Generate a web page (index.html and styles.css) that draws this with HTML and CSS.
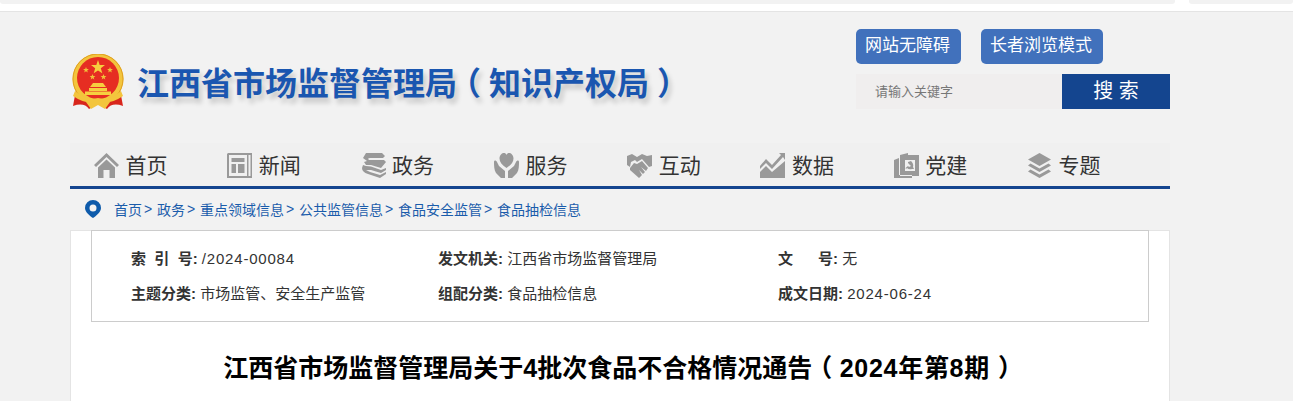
FILE: index.html
```html
<!DOCTYPE html>
<html lang="zh-CN">
<head>
<meta charset="utf-8">
<title>江西省市场监督管理局</title>
<link rel="stylesheet" href="styles.css">
</head>
<body>
<div class="topstrip">
  <div class="topbar"><span class="seg seg-main"></span><span class="seg seg-side"></span></div>
</div>
<div class="wrap">
  <header class="header">
    <div class="brand">
      <svg class="emblem" viewBox="0 0 52 56" width="52" height="56" aria-hidden="true">
        <path d="M4 36 L1 52 Q12 48 17 55 L26 50 L35 55 Q40 48 51 52 L48 36 Z" fill="#d8261c"/>
        <circle cx="26" cy="25" r="25.5" fill="#f3c53d"/>
        <circle cx="26" cy="25" r="25" fill="none" stroke="#e0a021" stroke-width="1"/>
        <circle cx="26" cy="24" r="21" fill="#e62d22"/>
        <polygon points="26,6 27.7,11 33,11.1 28.8,14.3 30.3,19.3 26,16.4 21.7,19.3 23.2,14.3 19,11.1 24.3,11" fill="#f6cf3f"/>
        <polygon points="14,13 14.8,15 16.9,15.1 15.2,16.4 15.8,18.4 14,17.2 12.2,18.4 12.8,16.4 11.1,15.1 13.2,15" fill="#f0c23a"/>
        <polygon points="38,13 38.8,15 40.9,15.1 39.2,16.4 39.8,18.4 38,17.2 36.2,18.4 36.8,16.4 35.1,15.1 37.2,15" fill="#f0c23a"/>
        <polygon points="20.5,20 21.3,22 23.4,22.1 21.7,23.4 22.3,25.4 20.5,24.2 18.7,25.4 19.3,23.4 17.6,22.1 19.7,22" fill="#f0c23a"/>
        <polygon points="31.5,20 32.3,22 34.4,22.1 32.7,23.4 33.3,25.4 31.5,24.2 29.7,25.4 30.3,23.4 28.6,22.1 30.7,22" fill="#f0c23a"/>
        <path d="M21 29 H31 L34 33 H18 Z M17 34 H35 V37 H17 Z M13 37.5 H39 V41 H13 Z" fill="#f6cf3f"/>
        <path d="M3 37 Q14 47 26 44 Q38 47 49 37 L51 42 Q38 51 26 48 Q14 51 1 42 Z" fill="#f3c53d"/>
        <path d="M14 48 H38 L33 55 L26 51 L19 55 Z" fill="#f3c53d"/>
      </svg>
      <h1 class="site-title">江西省市场监督管理局<span class="paren">（</span>知识产权局<span class="paren">）</span></h1>
    </div>
    <div class="tools">
      <div class="mode-links">
        <a class="mode-btn">网站无障碍</a>
        <a class="mode-btn">长者浏览模式</a>
      </div>
      <div class="search">
        <span class="search-input">请输入关键字</span>
        <span class="search-btn">搜 索</span>
      </div>
    </div>
  </header>

  <nav class="nav">
    <a class="nav-item">
      <svg class="nav-icon" viewBox="0 0 25 25" aria-hidden="true"><path d="M12.5 0 L25 12 L23 14 L12.5 4 L2 14 L0 12 Z M4 14.5 L12.5 6.5 L21 14.5 V25 H15.5 V17 H9.5 V25 H4 Z"/></svg>
      <span>首页</span>
    </a>
    <a class="nav-item">
      <svg class="nav-icon" viewBox="0 0 25 25" aria-hidden="true"><path fill-rule="evenodd" d="M1 0 H25 V25 H0 V1 Z M2 2 V23 H20 V2 Z M21.5 2 V23 H23.5 V2 Z M4.5 5 H17.5 V9 H4.5 Z M4.5 11 H9 V20 H4.5 Z M11 11 H17.5 V20 H11 Z"/></svg>
      <span>新闻</span>
    </a>
    <a class="nav-item">
      <svg class="nav-icon" viewBox="0 0 25 25" aria-hidden="true"><path d="M5 0 H21 L24 3 L22 5 H9 Q6 5 8 7 H23 L25 9 L20 15 L10 12 H5 L3 9 L6 8 L2 5 Z M2 12 L5 13 L10 13.5 L20 17 L25 15 V17 L20 20 L10 17 L5 17 L9 19 L19 22 L25 19 V21 L19 25 L7 21 Q1 19 1 15 Z"/></svg>
      <span>政务</span>
    </a>
    <a class="nav-item">
      <svg class="nav-icon" viewBox="0 0 25 25" aria-hidden="true"><path d="M12.5 15 C8 12 5.5 9 5.5 5.5 C5.5 2 8 0 10 0 C11 0 12 .5 12.5 2 C13 .5 14 0 15 0 C17 0 19.5 2 19.5 5.5 C19.5 9 17 12 12.5 15 Z M0 9 C0 7 2 7 3 9 L5 13 L11 18 V25 H7 L2 20 C0 17 0 12 0 9 Z M25 9 C25 7 23 7 22 9 L20 13 L14 18 V25 H18 L23 20 C25 17 25 12 25 9 Z"/></svg>
      <span>服务</span>
    </a>
    <a class="nav-item">
      <svg class="nav-icon" viewBox="0 0 25 25" aria-hidden="true"><path d="M0 3 L5 1 L10 4 L15 1 L20 3 L25 2 V13 L22 14 L15 6 L10 9 L8 7 L4 9 L3 14 L0 12 Z M3 15 L7 10 L10 11 L15 8 L21 15 L19 18 L14 14 L18 19 L16 21 L12 17 L15 22 L12 25 L3 17 Z"/></svg>
      <span>互动</span>
    </a>
    <a class="nav-item">
      <svg class="nav-icon" viewBox="0 0 25 25" aria-hidden="true"><path d="M0 13 L6 6 L12 12 L21 2 L19 0 H25 V7 L23 4 L12 16 L6 10 L0 16 Z M0 19 L6 13 L12 19 L25 8 V25 H0 Z"/></svg>
      <span>数据</span>
    </a>
    <a class="nav-item">
      <svg class="nav-icon" viewBox="0 0 25 25" aria-hidden="true"><path fill-rule="evenodd" d="M0 7 L5 5 V22 H18 V25 H0 Z M6 2 L14 0 V2 H25 V23 H6 Z M11 7 V18 H21 V7 Z M14 9 L17 8 Q20 11 19 14 L20 16 L18 16 Q15 17 13 15 L12 16 L11.5 15 L14 13 L15 14 L17 13 L14 10 Z" /></svg>
      <span>党建</span>
    </a>
    <a class="nav-item">
      <svg class="nav-icon" viewBox="0 0 25 25" aria-hidden="true"><path d="M12.5 0 L24 6.5 L12.5 13 L1 6.5 Z M3.5 10.5 L12.5 15.5 L21.5 10.5 L24 12.5 L12.5 19 L1 12.5 Z M3.5 16.5 L12.5 21.5 L21.5 16.5 L24 18.5 L12.5 25 L1 18.5 Z"/></svg>
      <span>专题</span>
    </a>
  </nav>

  <div class="crumbs">
    <svg class="pin" viewBox="0 0 16 18" width="16" height="18" aria-hidden="true"><path fill-rule="evenodd" d="M8 0 A8 8 0 0 1 16 8 C16 12 11 16 8 18 C5 16 0 12 0 8 A8 8 0 0 1 8 0 Z M8 4.5 A3.5 3.5 0 1 0 8 11.5 A3.5 3.5 0 1 0 8 4.5 Z"/></svg>
    <a class="crumb">首页</a><i class="sep">&gt;</i>
    <a class="crumb">政务</a><i class="sep">&gt;</i>
    <a class="crumb">重点领域信息</a><i class="sep">&gt;</i>
    <a class="crumb">公共监管信息</a><i class="sep">&gt;</i>
    <a class="crumb">食品安全监管</a><i class="sep">&gt;</i>
    <a class="crumb">食品抽检信息</a>
  </div>

  <main class="card">
    <section class="meta">
      <div class="meta-col col-a">
        <p><b>索&nbsp;&nbsp;引&nbsp;&nbsp;号:</b> <span class="latin">/2024-00084</span></p>
        <p><b>主题分类:</b> 市场监管、安全生产监管</p>
      </div>
      <div class="meta-col col-b">
        <p><b>发文机关:</b> 江西省市场监督管理局</p>
        <p><b>组配分类:</b> 食品抽检信息</p>
      </div>
      <div class="meta-col col-c">
        <p><b>文&nbsp;&nbsp;&nbsp;&nbsp;&nbsp;&nbsp;号:</b> 无</p>
        <p><b>成文日期:</b> <span class="latin">2024-06-24</span></p>
      </div>
    </section>
    <h2 class="doc-title">江西省市场监督管理局关于4批次食品不合格情况通告<span class="paren paren-open">（</span><span class="year">2024年第8期</span><span class="paren paren-close">）</span></h2>
  </main>
</div>
</body>
</html>
```
FILE: styles.css
```css
* { box-sizing: border-box; }
html, body { margin: 0; padding: 0; }
html { overflow: hidden; }
body {
  height: 401px;
  overflow: hidden;
  background: #f2f2f2;
  font-family: "Liberation Sans", "Noto Sans CJK SC", sans-serif;
  color: #333;
}
.topstrip {
  height: 12px;
  background: #fff;
  border-bottom: 1px solid #e4e4e4;
}
.topbar { display: flex; gap: 14px; height: 4px; }
.seg { background: #f2f2f2; border-radius: 0 0 3px 3px; }
.seg-main { width: 1175px; }
.seg-side { flex: 1; }
.wrap { width: 1100px; margin-left: 70px; }
.header {
  height: 131px;
  display: flex;
  justify-content: space-between;
}
.brand { display: flex; align-items: flex-start; padding: 42px 0 0 2px; }
.emblem { flex: none; }
.site-title {
  margin: 8px 0 0 13px;
  font-size: 32px;
  line-height: 44px;
  font-weight: 700;
  color: #1a56b0;
  text-shadow: 3px 5px 5px rgba(0, 0, 0, .18);
  white-space: nowrap;
}
.paren {
  display: inline-block;
  width: 1em;
  text-align: center;
  font-feature-settings: "halt";
}
.paren-open { width: 1.1em; }
.paren-close { width: 1.15em; }
.year { letter-spacing: .7px; }
.tools {
  width: 314px;
  padding-top: 17px;
  display: flex;
  flex-direction: column;
}
.mode-links { display: flex; gap: 20px; }
.mode-btn {
  height: 35px;
  padding: 0 11px 0 9px;
  border-radius: 5px;
  background: #4171bc;
  color: #fff;
  font-size: 17px;
  line-height: 33px;
  white-space: nowrap;
}
.search { display: flex; margin-top: 10px; height: 35px; }
.search-input {
  flex: 1;
  background: #f0eeee;
  color: #777;
  font-size: 13px;
  line-height: 35px;
  padding-left: 19px;
}
.search-btn {
  width: 108px;
  background: #14458f;
  color: #fff;
  font-size: 20px;
  line-height: 35px;
  text-align: center;
}
.nav {
  height: 46px;
  display: flex;
  padding-left: 24px;
  background: #f0f0f0;
  border-bottom: 3px solid #14458f;
}
.nav-item {
  width: 133.3px;
  flex: none;
  display: flex;
  align-items: center;
  gap: 6.5px;
  font-size: 21px;
  color: #333;
}
.nav-item span { margin-bottom: 2px; }
.nav-icon { width: 25px; height: 25px; fill: #999; flex: none; margin-top: 2px; }
.crumbs {
  height: 41px;
  display: flex;
  align-items: center;
  padding: 0 0 2px 15px;
  font-size: 14px;
  white-space: nowrap;
}
.pin { fill: #0e5bab; margin-right: 13px; flex: none; }
.crumb { color: #1a5cab; }
.sep {
  width: 15px;
  flex: none;
  font-style: normal;
  color: #1a5cab;
  padding-left: 2px;
}
.card {
  height: 171px;
  background: #fff;
  border: 1px solid #e4e4e4;
  border-bottom: 0;
  padding: 0 20px;
}
.meta {
  height: 92px;
  display: flex;
  background: #fff;
  border: 1px solid #ccc;
  padding: 17px 0 0 39px;
  margin-top: -1px;
  font-size: 15px;
  color: #333;
}
.meta-col p { margin: 0 0 13px; line-height: 22px; white-space: nowrap; }
.meta-col b { font-weight: 700; }
.latin { letter-spacing: .8px; }
.col-a { width: 307px; }
.col-b { width: 340px; }
.col-c { flex: 1; }
.doc-title {
  margin: 28px 0 0 2px;
  text-align: center;
  font-size: 25px;
  line-height: 36px;
  font-weight: 700;
  color: #000;
  white-space: nowrap;
}
```
